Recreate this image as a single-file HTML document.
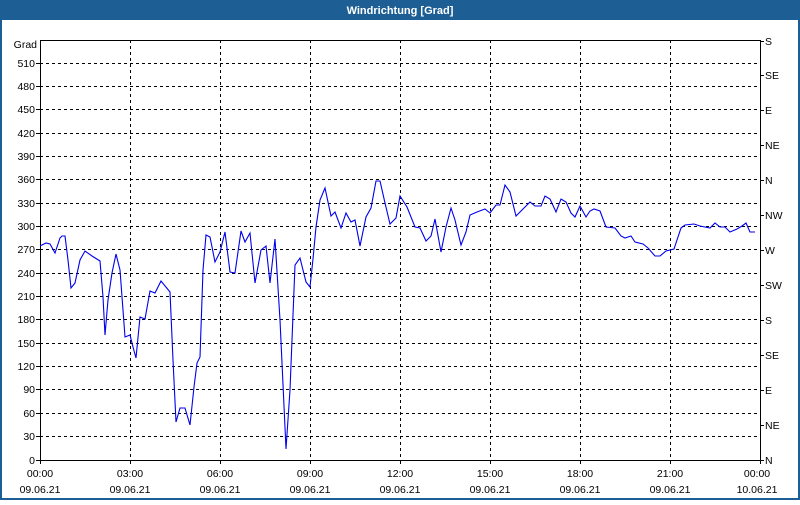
<!DOCTYPE html><html><head><style>
body{margin:0;width:800px;height:500px;overflow:hidden;background:#fff;font-family:"Liberation Sans",sans-serif}
</style></head><body>
<svg width="800" height="500" xmlns="http://www.w3.org/2000/svg" font-family="Liberation Sans, sans-serif" font-size="10.5">
<rect x="0" y="0" width="800" height="500" fill="#1d5f95"/>
<rect x="2" y="20" width="796" height="478" fill="#fff"/>
<text x="400" y="14" fill="#fff" font-weight="bold" text-anchor="middle" font-size="11">Windrichtung [Grad]</text>
<g stroke="#000" stroke-width="1" stroke-dasharray="3,3" shape-rendering="crispEdges">
<path d="M40 63.5H760M40 86.5H760M40 109.5H760M40 133.5H760M40 156.5H760M40 179.5H760M40 203.5H760M40 226.5H760M40 249.5H760M40 273.5H760M40 296.5H760M40 319.5H760M40 343.5H760M40 366.5H760M40 389.5H760M40 413.5H760M40 436.5H760"/>
<path d="M130.5 40V460M220.5 40V460M310.5 40V460M400.5 40V460M490.5 40V460M580.5 40V460M670.5 40V460"/>
</g>
<g stroke="#000" fill="none" shape-rendering="crispEdges">
<rect x="40.5" y="40.5" width="720" height="420"/>
<path d="M760 41.5h4M760 75.5h4M760 110.5h4M760 145.5h4M760 180.5h4M760 215.5h4M760 250.5h4M760 285.5h4M760 320.5h4M760 355.5h4M760 390.5h4M760 425.5h4M760 460.5h4"/>
<path d="M40.5 460v4M130.5 460v4M220.5 460v4M310.5 460v4M400.5 460v4M490.5 460v4M580.5 460v4M670.5 460v4M760.5 460v4"/>
<path d="M36 63.5h4M36 86.5h4M36 109.5h4M36 133.5h4M36 156.5h4M36 179.5h4M36 203.5h4M36 226.5h4M36 249.5h4M36 273.5h4M36 296.5h4M36 319.5h4M36 343.5h4M36 366.5h4M36 389.5h4M36 413.5h4M36 436.5h4M36 460.5h4"/>
</g>
<g text-anchor="end" fill="#000">
<text x="37" y="48">Grad</text>
<text x="35" y="67">510</text><text x="35" y="90">480</text><text x="35" y="113">450</text><text x="35" y="137">420</text><text x="35" y="160">390</text><text x="35" y="183">360</text><text x="35" y="207">330</text><text x="35" y="230">300</text><text x="35" y="253">270</text><text x="35" y="277">240</text><text x="35" y="300">210</text><text x="35" y="323">180</text><text x="35" y="347">150</text><text x="35" y="370">120</text><text x="35" y="393">90</text><text x="35" y="417">60</text><text x="35" y="440">30</text><text x="35" y="464">0</text>
</g>
<g fill="#000">
<text x="765" y="45">S</text><text x="765" y="79">SE</text><text x="765" y="114">E</text><text x="765" y="149">NE</text><text x="765" y="184">N</text><text x="765" y="219">NW</text><text x="765" y="254">W</text><text x="765" y="289">SW</text><text x="765" y="324">S</text><text x="765" y="359">SE</text><text x="765" y="394">E</text><text x="765" y="429">NE</text><text x="765" y="464">N</text>
</g>
<g text-anchor="middle" fill="#000">
<text x="40" y="477">00:00</text><text x="40" y="493">09.06.21</text>
<text x="130" y="477">03:00</text><text x="130" y="493">09.06.21</text>
<text x="220" y="477">06:00</text><text x="220" y="493">09.06.21</text>
<text x="310" y="477">09:00</text><text x="310" y="493">09.06.21</text>
<text x="400" y="477">12:00</text><text x="400" y="493">09.06.21</text>
<text x="490" y="477">15:00</text><text x="490" y="493">09.06.21</text>
<text x="580" y="477">18:00</text><text x="580" y="493">09.06.21</text>
<text x="670" y="477">21:00</text><text x="670" y="493">09.06.21</text>
<text x="757" y="477">00:00</text><text x="757" y="493">10.06.21</text>
</g>
<polyline fill="none" stroke="#0000ee" stroke-width="1.1" points="40,246 46,243 50,244 55,253 60,238 62,236 65,236 68,260 71,288 75,283 80,260 85,251 92,256 100,261 103,297 105,335 108,300 112,273 116,254 120,270 125,337 130,335 133,347 136,358 140,317 145,319 150,291 155,293 161,281 170,292 173,360 176,422 180,408 185,408 190,425 194,387 197,363 200,357 203,270 206,235 210,237 215,262 220,252 225,232 230,272 235,273 241,231 245,242 250,233 255,283 261,250 266,246 270,283 275,239 280,320 286,449 290,390 295,265 300,258 306,282 310,287 313,259 316,227 320,200 325,188 331,216 335,212 341,228 346,213 351,222 355,220 360,246 366,217 371,208 376,181 380,181 385,203 390,224 396,218 400,196 407,207 415,227 420,228 426,241 431,236 435,219 441,252 446,227 451,208 455,220 461,245 466,232 470,215 477,212 485,209 490,213 496,205 500,205 505,185 510,192 516,216 523,209 530,202 535,206 541,206 545,196 550,199 556,212 561,199 566,202 571,213 575,217 580,206 586,217 590,211 594,209 600,211 606,227 615,228 621,236 625,238 631,236 635,242 643,244 648,248 655,256 660,256 666,251 674,249 681,228 685,225 694,224 700,226 710,228 715,223 720,227 725,227 730,232 737,229 742,226 746,223 750,232 755,232"/>
</svg>
</body></html>
